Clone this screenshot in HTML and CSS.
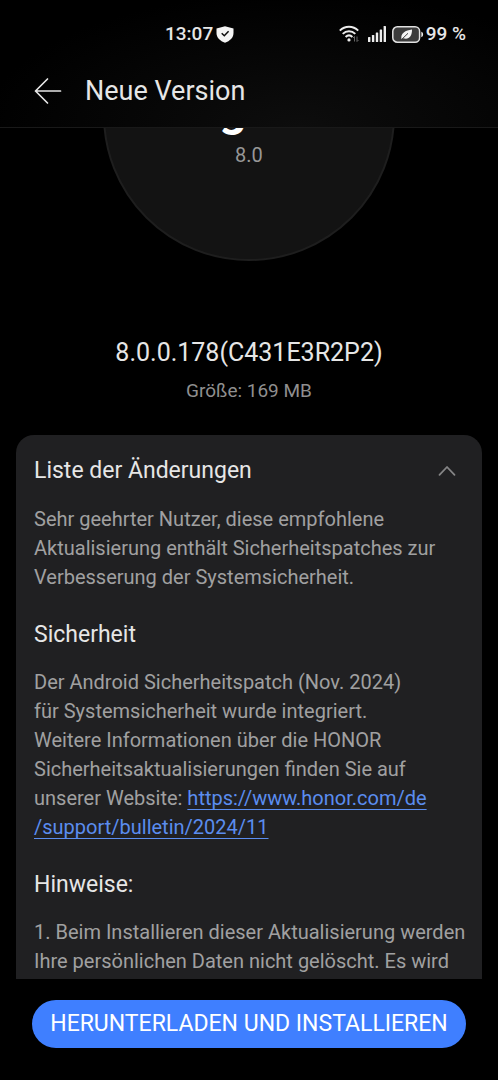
FILE: index.html
```html
<!DOCTYPE html>
<html lang="de">
<head>
<meta charset="utf-8">
<meta name="viewport" content="width=device-width, initial-scale=1">
<title>Neue Version</title>
<link rel="stylesheet" href="styles.css">
</head>
<body>
<div class="screen">
  <header class="top">
    <div class="status">
      <div class="status-group">
        <span>13:07</span>
        <svg width="18" height="17" viewBox="0 0 18 17" aria-hidden="true">
          <path d="M9 .3 17.500 2.600V7c0 4.600-3.600 8-8.500 9.800C4.100 15 .5 11.600.5 7V2.600z" fill="#f4f4f4"/>
          <path d="M5.700 7.300 8.300 9.800 12.600 5.300" fill="none" stroke="#0a0a0a" stroke-width="1.500"/>
        </svg>
      </div>
      <div class="status-group status-right">
        <svg width="21" height="18" viewBox="0 0 21 18" fill="none" stroke="#ededed" stroke-width="2" aria-hidden="true">
          <path d="M.8 5.600C6 .5 14 .5 19.200 5.600"/>
          <path d="M3.700 8.900c3.600-3.500 9-3.500 12.600 0"/>
          <path d="M6.600 12c2-1.900 4.800-1.900 6.800 0"/>
          <circle cx="10" cy="14.900" r="1.600" fill="#ededed" stroke="none"/>
          <path d="M15.500 11.500v5M14 13l1.500-1.500M18 16.500v-5M19.500 15 18 16.500" stroke="#666" stroke-width="1"/>
        </svg>
        <svg class="signal" width="18" height="16" viewBox="0 0 18 16" fill="#ededed" aria-hidden="true">
          <rect x="0" y="11" width="2.400" height="5" rx=".6"/>
          <rect x="3.900" y="9" width="2.400" height="7" rx=".6"/>
          <rect x="7.800" y="6.500" width="2.400" height="9.500" rx=".6"/>
          <rect x="11.700" y="3.500" width="2.400" height="12.500" rx=".6"/>
          <rect x="15.600" y="0" width="2.400" height="16" rx=".6"/>
        </svg>
        <svg class="battery" width="32" height="17" viewBox="0 0 32 17" aria-hidden="true">
          <rect x=".8" y=".8" width="26.800" height="15.400" rx="4.500" fill="#3c3c3c" stroke="#e2e2e2" stroke-width="1.500"/>
          <path d="M29.300 5.800c2.400.5 2.400 4.900 0 5.400z" fill="#ededed"/>
          <path d="M9.500 13.200C8.200 7 13.500 4.500 20 3.500c.2 7-3.500 10.500-8.700 8.700z" fill="#f4f4f4"/>
          <path d="M9.300 13.800 16 7.300" stroke="#3c3c3c" stroke-width="1"/>
        </svg>
        <span>99 %</span>
      </div>
    </div>
    <div class="titlebar">
      <button class="back" type="button" aria-label="Zurück">
        <svg width="28" height="28" viewBox="0 0 28 28" fill="none" stroke="#e6e6e6" stroke-width="1.700" stroke-linecap="round" stroke-linejoin="round" aria-hidden="true">
          <path d="M26.500 14H1.500M13.500 2 1.500 14l12 12"/>
        </svg>
      </button>
      <h1 class="title">Neue Version</h1>
    </div>
  </header>

  <main class="content">
    <div class="disc">
      <span class="disc-name">MagicOS</span>
      <span class="disc-version">8.0</span>
    </div>
    <h2 class="build">8.0.0.178(C431E3R2P2)</h2>
    <p class="size">Größe: 169 MB</p>

    <section class="card">
      <button class="card-head" type="button" aria-expanded="true" aria-controls="changes">
        <span>Liste der Änderungen</span>
        <svg width="18" height="12" viewBox="0 0 18 12" fill="none" stroke="#858586" stroke-width="1.800" stroke-linecap="round" stroke-linejoin="round" aria-hidden="true">
          <path d="M1.500 9.800 9 2l7.500 7.800"/>
        </svg>
      </button>
      <div id="changes">
        <p class="text">Sehr geehrter Nutzer, diese empfohlene<br>Aktualisierung enthält Sicherheitspatches zur<br>Verbesserung der Systemsicherheit.</p>
        <h3 class="subhead">Sicherheit</h3>
        <p class="text">Der Android Sicherheitspatch (Nov. 2024)<br>für Systemsicherheit wurde integriert.<br>Weitere Informationen über die HONOR<br>Sicherheitsaktualisierungen finden Sie auf<br>unserer Website: <a class="link" href="https://www.honor.com/de/support/bulletin/2024/11">https://www.honor.com/de<br>/support/bulletin/2024/11</a></p>
        <h3 class="subhead">Hinweise:</h3>
        <p class="text">1. Beim Installieren dieser Aktualisierung werden<br>Ihre persönlichen Daten nicht gelöscht. Es wird</p>
      </div>
    </section>
  </main>

  <footer class="actions">
    <button class="install" type="button">HERUNTERLADEN UND INSTALLIEREN</button>
  </footer>
</div>
</body>
</html>
```
FILE: styles.css
```css
* {
  box-sizing: border-box;
}

body,
h1,
h2,
h3,
p {
  margin: 0;
}

body {
  background: #000;
  color: #e6e6e6;
  font-family: Roboto, "Noto Sans", sans-serif;
}

button {
  border: 0;
  padding: 0;
  background: none;
  color: inherit;
  font: inherit;
}

.screen {
  display: flex;
  flex-direction: column;
  height: 100vh;
}

.top {
  flex: none;
  border-bottom: 1px solid #191919;
  background: radial-gradient(ellipse at 60% 100%, #0d0d0d, #000 75%);
}

.status {
  display: flex;
  justify-content: space-between;
  padding: 22px 32px 0 165px;
  font-size: 19px;
  font-weight: 500;
  line-height: 24px;
}

.status-group {
  display: flex;
  align-items: center;
  gap: 3px;
}

.status-right {
  gap: 2px;
}

.signal {
  margin: 0 4px 0 6px;
}

.titlebar {
  display: flex;
  align-items: center;
  gap: 23px;
  padding: 25px 34px 16px;
}

.back {
  display: flex;
}

.title {
  font-size: 27px;
  font-weight: 400;
  line-height: 40px;
}

.content {
  flex: 1;
  min-height: 0;
  overflow: hidden;
  padding: 0 16px;
  text-align: center;
}

.disc {
  display: flex;
  flex-direction: column;
  align-items: center;
  width: 292px;
  height: 292px;
  margin: -159px auto 0;
  padding-top: 114px;
  border: 2px solid #1e1e1e;
  border-radius: 50%;
  background: #131313;
}

.disc-name {
  color: #fff;
  font-size: 48px;
  font-weight: 700;
  line-height: 48px;
}

.disc-version {
  margin-top: 10px;
  color: #979797;
  font-size: 20px;
  line-height: 24px;
}

.build {
  margin-top: 76px;
  font-size: 25px;
  font-weight: 400;
  line-height: 32px;
}

.size {
  margin-top: 8px;
  color: #8f8f8f;
  font-size: 19px;
  line-height: 28px;
}

.card {
  margin-top: 30px;
  padding: 18px 18px 24px;
  border-radius: 18px;
  background: #202022;
  text-align: left;
}

.card-head {
  display: flex;
  align-items: center;
  justify-content: space-between;
  width: 100%;
  padding-right: 8px;
  font-size: 23px;
  line-height: 36px;
}

.text {
  margin-top: 16px;
  color: #a0a0a1;
  font-size: 20px;
  line-height: 29px;
  white-space: nowrap;
}

.subhead {
  margin-top: 26px;
  font-size: 23px;
  font-weight: 400;
  line-height: 34px;
}

.link {
  color: #5b8def;
  text-decoration-thickness: 1px;
  text-underline-offset: 4px;
}

.actions {
  flex: none;
  padding: 21px 32px 32px;
}

.install {
  width: 100%;
  border-radius: 24px;
  background: #3f7fff;
  color: #fff;
  font-size: 23px;
  line-height: 48px;
  white-space: nowrap;
}
```
